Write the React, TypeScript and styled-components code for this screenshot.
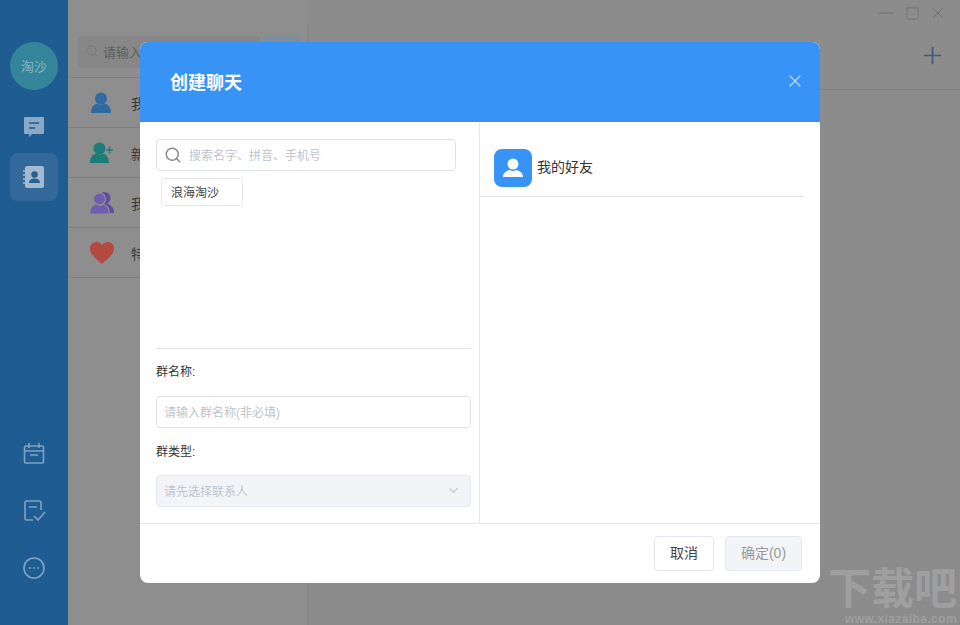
import * as React from 'react';
import styled, { createGlobalStyle } from 'styled-components';
import { Search, ChevronDown, X, Minus, Plus, Square } from 'lucide-react';

const fontStack = '"Liberation Sans", "Noto Sans CJK SC", sans-serif';

const GlobalStyle = createGlobalStyle`
    html, body { margin: 0; padding: 0; background: #8c8c8c; }
    * { box-sizing: border-box; }
    body { font-family: ${fontStack}; }
`;

const Page = styled.div`
    position: relative;
    width: 960px;
    height: 625px;
    display: flex;
    overflow: hidden;
    background: #8c8c8c;
`;

const Sidebar = styled.div`
    width: 68px;
    flex: none;
    display: flex;
    flex-direction: column;
    align-items: center;
    padding: 42px 0 0;
    background: #1f5c92;
`;

const SideAvatar = styled.div`
    width: 48px;
    height: 48px;
    border-radius: 50%;
    background: #35859a;
    color: #86b5c0;
    font-size: 13px;
    padding-bottom: 2px;
    display: flex;
    align-items: center;
    justify-content: center;
`;

const SideItem = styled.div<{ $active?: boolean }>`
    width: 48px;
    height: 48px;
    border-radius: 8px;
    display: flex;
    align-items: center;
    justify-content: center;
    color: #7fa3c2;
    background: ${(p) => (p.$active ? '#33689a' : 'transparent')};
`;

const SideGroup = styled.div`
    display: flex;
    flex-direction: column;
    align-items: center;
    gap: 2px;
    margin-top: 13px;
`;

const SideBottom = styled.div`
    display: flex;
    flex-direction: column;
    align-items: center;
    gap: 9px;
    margin-top: auto;
    padding-bottom: 33px;
`;

const ListPanel = styled.div`
    position: relative;
    width: 240px;
    flex: none;
    padding-top: 36px;
    background: #8e8e8e;
    &::after {
        content: '';
        position: absolute;
        top: 24px;
        bottom: 0;
        right: 0;
        width: 1px;
        background: #808080;
    }
`;

const ListSearchRow = styled.div`
    display: flex;
    gap: 2px;
    padding: 0 7px 0 10px;
    margin-bottom: 9px;
`;

const ListSearch = styled.div`
    flex: 1;
    height: 32px;
    border-radius: 4px;
    background: #878787;
    color: #5e5e5e;
    font-size: 13px;
    display: flex;
    align-items: center;
    gap: 4px;
    padding: 0 0 2px 7px;
`;

const ListSearchButton = styled.div`
    width: 38px;
    height: 32px;
    border-radius: 4px;
    background: #7f8c99;
`;

const ListRow = styled.div`
    height: 50px;
    display: flex;
    align-items: center;
    gap: 17px;
    padding-left: 22px;
    border-top: 1px solid #808080;
    font-size: 14px;
    color: #3a3a3a;
    &:last-child { border-bottom: 1px solid #808080; height: 51px; }
`;

const RowIcon = styled.svg`
    width: 24px;
    height: 24px;
    flex: none;
`;

const Main = styled.div`
    flex: 1;
    display: flex;
    flex-direction: column;
`;

const WindowBar = styled.div`
    height: 26px;
    display: flex;
    justify-content: flex-end;
    align-items: center;
    padding-right: 9px;
    color: #6e6e6e;
`;

const WindowButton = styled.div`
    width: 26px;
    display: flex;
    justify-content: center;
`;

const MainHead = styled.div`
    height: 64px;
    display: flex;
    justify-content: flex-end;
    align-items: center;
    padding: 0 14px 4px 0;
    border-bottom: 1px solid #808080;
    color: #3f5a80;
`;

const Watermark = styled.div`
    position: absolute;
    right: 3px;
    bottom: 0;
    color: #9f9f9f;
    text-align: right;
    white-space: nowrap;
`;

const WatermarkTitle = styled.div`
    font-size: 43px;
    font-weight: 700;
    line-height: 44px;
`;

const WatermarkUrl = styled.div`
    margin-top: 3px;
    font-size: 12px;
    font-weight: 700;
    line-height: 11px;
    letter-spacing: 0.4px;
`;

const Modal = styled.div`
    position: absolute;
    left: 140px;
    top: 42px;
    width: 680px;
    height: 541px;
    border-radius: 8px;
    background: #fff;
    overflow: hidden;
    display: flex;
    flex-direction: column;
`;

const ModalHeader = styled.div`
    height: 80px;
    flex: none;
    display: flex;
    align-items: center;
    justify-content: space-between;
    padding: 0 15px 2px 30px;
    background: #3793f5;
    color: #fff;
`;

const ModalTitle = styled.h2`
    margin: 0;
    font-size: 18px;
    font-weight: 700;
`;

const CloseButton = styled.div`
    display: flex;
    color: #b5d7fb;
`;

const ModalBody = styled.div`
    flex: 1;
    display: flex;
    min-height: 0;
`;

const LeftColumn = styled.div`
    width: 340px;
    flex: none;
    display: flex;
    flex-direction: column;
    padding: 17px 8px 16px 16px;
    border-right: 1px solid #e4e7ed;
`;

const SearchBox = styled.div`
    width: 300px;
    height: 32px;
    flex: none;
    display: flex;
    align-items: center;
    gap: 7px;
    padding-left: 7px;
    border: 1px solid #dfe3e8;
    border-radius: 4px;
    color: #c0c4cc;
    font-size: 12px;
`;

const SearchGlyph = styled.span`
    display: flex;
    color: #8a8a8a;
`;

const SearchHint = styled.span`
    padding-bottom: 2px;
`;

const Chip = styled.div`
    width: 82px;
    height: 28px;
    flex: none;
    margin: 7px 0 0 5px;
    padding: 0 0 2px 9px;
    display: flex;
    align-items: center;
    border: 1px solid #e4e7ed;
    border-radius: 4px;
    font-size: 12px;
    color: #444;
`;

const Divider = styled.div`
    height: 1px;
    flex: none;
    margin-top: auto;
    background: #e0e3e8;
`;

const FieldLabel = styled.div`
    height: 47px;
    flex: none;
    display: flex;
    align-items: center;
    padding-bottom: 4px;
    font-size: 12px;
    color: #333;
`;

const TypeLabel = styled(FieldLabel)`
    padding-bottom: 2px;
`;

const Field = styled.div<{ $disabled?: boolean }>`
    height: 32px;
    flex: none;
    display: flex;
    align-items: center;
    justify-content: space-between;
    padding: 0 9px 2px 7px;
    border: 1px solid ${(p) => (p.$disabled ? '#e4e7ed' : '#dfe3e8')};
    border-radius: 4px;
    font-size: 12px;
    color: #c0c4cc;
    background: ${(p) => (p.$disabled ? '#f3f4f8' : '#fff')};
`;

const RightColumn = styled.div`
    flex: 1;
    padding: 27px 16px 0 0;
`;

const GroupRow = styled.div`
    height: 48px;
    display: flex;
    align-items: flex-start;
    gap: 5px;
    padding-left: 14px;
    border-bottom: 1px solid #e0e3e8;
    font-size: 14px;
    color: #333;
`;

const GroupAvatar = styled.div`
    width: 38px;
    height: 38px;
    border-radius: 8px;
    background: #3793f5;
    display: flex;
    align-items: center;
    justify-content: center;
`;

const GroupName = styled.span`
    line-height: 37px;
`;

const ModalFooter = styled.div`
    height: 60px;
    flex: none;
    display: flex;
    justify-content: flex-end;
    align-items: flex-start;
    gap: 11px;
    padding: 12px 18px 0 0;
    border-top: 1px solid #e4e7ed;
`;

const FooterButton = styled.button<{ $disabled?: boolean }>`
    height: 35px;
    width: ${(p) => (p.$disabled ? '77px' : '60px')};
    padding: 0 0 3px;
    border: 1px solid #e4e7ed;
    border-radius: 4px;
    font: 14px ${fontStack};
    color: ${(p) => (p.$disabled ? '#999' : '#444')};
    background: ${(p) => (p.$disabled ? '#f3f4f8' : '#fff')};
`;

const ChatIcon = () => (
    <svg width="24" height="24" viewBox="0 0 24 24">
        <path d="M3 2h18a1 1 0 0 1 1 1v15a1 1 0 0 1-1 1H10l-3 3v-3H3a1 1 0 0 1-1-1V3a1 1 0 0 1 1-1z" fill="#8ba9c4" />
        <path d="M7 8h10M7 13h6" stroke="#1f5c92" strokeWidth="1.6" />
    </svg>
);

const ContactsIcon = () => (
    <svg width="24" height="24" viewBox="0 0 24 24">
        <rect x="3" y="1" width="19" height="22" rx="2" fill="#a3b9cf" />
        <path d="M1 6h4M1 10h4M1 14h4M1 18h4" stroke="#a3b9cf" strokeWidth="1.4" />
        <circle cx="12.5" cy="9.5" r="3.2" fill="#2a5f92" />
        <path d="M7 18c0-3 2.500-4.500 5.500-4.500S18 15 18 18z" fill="#2a5f92" />
    </svg>
);

const CalendarIcon = () => (
    <svg width="24" height="24" viewBox="0 0 24 24" fill="none" stroke="currentColor" strokeWidth="1.6">
        <rect x="2.500" y="4" width="19" height="17" rx="1.500" />
        <path d="M7 1v5M17 1v5M2.500 9h19M8 13h8" />
    </svg>
);

const TaskIcon = () => (
    <svg width="24" height="24" viewBox="0 0 24 24" fill="none" stroke="currentColor" strokeWidth="1.6">
        <path d="M11 21H4.500a1.500 1.500 0 0 1-1.500-1.500v-16A1.500 1.500 0 0 1 4.500 2h13A1.500 1.500 0 0 1 19 3.500V11" />
        <path d="M7 8h8M12 17l4 4 7-8" />
    </svg>
);

const MoreIcon = () => (
    <svg width="24" height="24" viewBox="0 0 24 24" fill="none" stroke="currentColor" strokeWidth="1.6">
        <circle cx="12" cy="12" r="10" />
        <path d="M7 12h1.500M11.250 12h1.500M15.500 12H17" strokeWidth="2" />
    </svg>
);

const PersonRowIcon = ({ color }: { color: string }) => (
    <RowIcon viewBox="0 0 24 24">
        <circle cx="11" cy="7.500" r="6" fill={color} />
        <path d="M1 22c0-6 3-8.500 6-9.500 2.500 1.500 5.500 1.500 8 0 3 1 6 3.500 6 9.500z" fill={color} />
    </RowIcon>
);

const AddPersonIcon = () => (
    <RowIcon viewBox="0 0 24 24">
        <circle cx="9.500" cy="7.500" r="6" fill="#1c7d78" />
        <path d="M0 22c0-6 3-8.500 6-9.500 2.500 1.500 5.500 1.500 7 0 3 1 6 3.500 6 9.500z" fill="#1c7d78" />
        <path d="M16 9h7M19.500 5.500v7" stroke="#1c7d78" strokeWidth="1.400" />
    </RowIcon>
);

const GroupRowIcon = () => (
    <RowIcon viewBox="0 0 24 24">
        <circle cx="14.500" cy="7" r="6" fill="#5d4f99" />
        <path d="M10 21c0-6 2-8 6-9 4 1 8 4 8 10H12z" fill="#5d4f99" />
        <circle cx="9.500" cy="8" r="6" fill="#6f5db0" stroke="#8e8e8e" strokeWidth="1.200" />
        <path d="M-0.500 23c0-6 3-9 6.500-10 2.500 1.500 5.500 1.500 7 0 3.500 1 6.500 4 6.500 10z" fill="#6f5db0" stroke="#8e8e8e" strokeWidth="1.200" />
    </RowIcon>
);

const HeartIcon = () => (
    <RowIcon viewBox="0 0 24 24">
        <path d="M12 23C5 17 0 13 0 7.500 0 3.500 3 1 6.500 1 9 1 11 2.500 12 4c1-1.500 3-3 5.500-3C21 1 24 3.500 24 7.500 24 13 19 17 12 23z" fill="#b24a42" />
    </RowIcon>
);

const App = () => (
    <>
        <GlobalStyle />
        <Page>
            <Sidebar>
                <SideAvatar>淘沙</SideAvatar>
                <SideGroup>
                    <SideItem><ChatIcon /></SideItem>
                    <SideItem $active={true}><ContactsIcon /></SideItem>
                </SideGroup>
                <SideBottom>
                    <SideItem><CalendarIcon /></SideItem>
                    <SideItem><TaskIcon /></SideItem>
                    <SideItem><MoreIcon /></SideItem>
                </SideBottom>
            </Sidebar>
            <ListPanel>
                <ListSearchRow>
                    <ListSearch>
                        <Search size={14} strokeWidth={1.5} color="#767676" />
                        请输入
                    </ListSearch>
                    <ListSearchButton />
                </ListSearchRow>
                <ListRow><PersonRowIcon color="#2f6ba3" />我的好友</ListRow>
                <ListRow><AddPersonIcon />新的朋友</ListRow>
                <ListRow><GroupRowIcon />我的群组</ListRow>
                <ListRow><HeartIcon />特别关注</ListRow>
            </ListPanel>
            <Main>
                <WindowBar>
                    <WindowButton><Minus size={24} strokeWidth={1} /></WindowButton>
                    <WindowButton><Square size={15} strokeWidth={1.2} /></WindowButton>
                    <WindowButton><X size={18} strokeWidth={1.2} /></WindowButton>
                </WindowBar>
                <MainHead>
                    <Plus size={27} strokeWidth={1.5} />
                </MainHead>
            </Main>
            <Watermark>
                <WatermarkTitle>下载吧</WatermarkTitle>
                <WatermarkUrl>www.xiazaiba.com</WatermarkUrl>
            </Watermark>
            <Modal>
                <ModalHeader>
                    <ModalTitle>创建聊天</ModalTitle>
                    <CloseButton><X size={20} strokeWidth={1.5} /></CloseButton>
                </ModalHeader>
                <ModalBody>
                    <LeftColumn>
                        <SearchBox>
                            <SearchGlyph><Search size={18} strokeWidth={2} /></SearchGlyph>
                            <SearchHint>搜索名字、拼音、手机号</SearchHint>
                        </SearchBox>
                        <Chip>浪海淘沙</Chip>
                        <Divider />
                        <FieldLabel>群名称:</FieldLabel>
                        <Field>请输入群名称(非必填)</Field>
                        <TypeLabel>群类型:</TypeLabel>
                        <Field $disabled={true}>
                            请先选择联系人
                            <ChevronDown size={15} color="#c0c4cc" />
                        </Field>
                    </LeftColumn>
                    <RightColumn>
                        <GroupRow>
                            <GroupAvatar>
                                <svg width="24" height="24" viewBox="0 0 24 24">
                                    <circle cx="12" cy="8" r="5.500" fill="#fff" />
                                    <path d="M2 21c0-4 3-6 6.500-7 2 1.200 5 1.200 7 0 3.500 1 6.500 3 6.500 7z" fill="#fff" />
                                </svg>
                            </GroupAvatar>
                            <GroupName>我的好友</GroupName>
                        </GroupRow>
                    </RightColumn>
                </ModalBody>
                <ModalFooter>
                    <FooterButton>取消</FooterButton>
                    <FooterButton $disabled={true}>确定(0)</FooterButton>
                </ModalFooter>
            </Modal>
        </Page>
    </>
);

export default App;
